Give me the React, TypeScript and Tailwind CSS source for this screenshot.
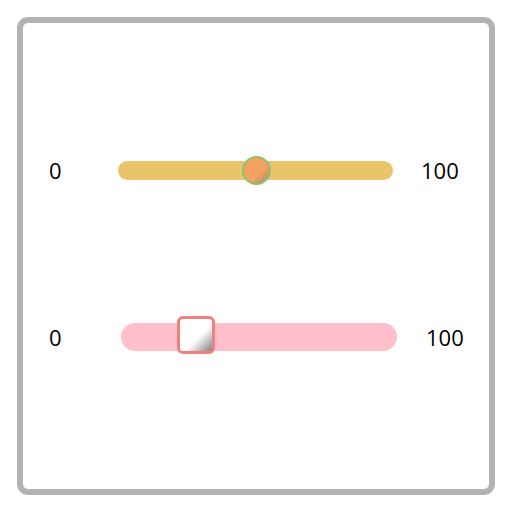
export default function App() {
  return (
    <div className="w-[512px] h-[512px] bg-white p-[17px] font-['Open_Sans',Arial,sans-serif] text-black">
      <div className="w-[478px] h-[478px] border-[6px] border-[#b3b3b3] rounded-[11px] pl-[26px] pt-[127px] flex flex-col gap-[127px]">
        {/* range 1 */}
        <div className="flex items-center h-[40px]">
          <span className="w-[69px] text-[22px] leading-none">0</span>
          <div className="relative w-[275px] h-[19px] rounded-full bg-[#e9c46a]">
            <div className="absolute left-[124px] top-[-5px] w-[29px] h-[29px] rounded-full border-2 border-[#8cc36c] bg-[linear-gradient(135deg,#f4a261_60%,#b08870)]" />
          </div>
          <span className="ml-[28px] text-[22px] leading-none">100</span>
        </div>
        {/* range 2 */}
        <div className="flex items-center h-[40px]">
          <span className="w-[72px] text-[22px] leading-none">0</span>
          <div className="relative w-[276px] h-[28px] rounded-full bg-[#ffc0cb]">
            <div className="absolute left-[56px] top-[-7px] w-[38px] h-[38px] rounded-[6px] border-[3px] border-[#f08080] bg-[linear-gradient(135deg,#ffffff_58%,#808080)]" />
          </div>
          <span className="ml-[29px] text-[22px] leading-none">100</span>
        </div>
      </div>
    </div>
  );
}
